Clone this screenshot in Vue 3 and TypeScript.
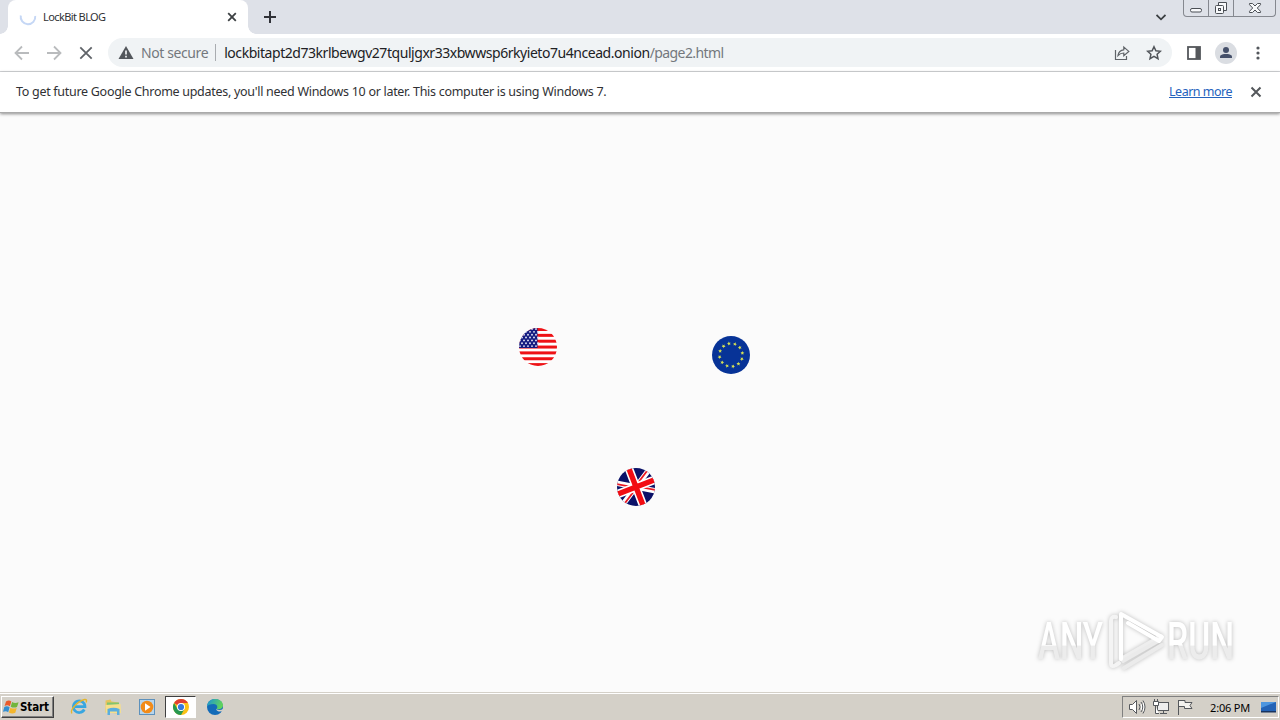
<template>
    <div class="screen">
        <header class="tab-strip">
            <div class="tab">
                <svg class="spinner" width="18" height="18" viewBox="0 0 18 18">
                    <path d="M1.8 7.5A7.3 7.3 0 1 0 16.2 8" />
                </svg>
                <span class="tab-title">LockBit BLOG</span>
                <svg class="tab-close" width="10" height="10" viewBox="0 0 10 10"><path d="M1.2 1.2l7.6 7.6M8.8 1.2L1.2 8.8" /></svg>
            </div>
            <svg class="new-tab" width="12" height="12" viewBox="0 0 12 12"><path d="M6 0v12M0 6h12" /></svg>
            <svg class="tab-search" width="10" height="7" viewBox="0 0 10 7"><path d="M.5 1L5 5.300 9.500 1" /></svg>
            <div class="window-controls">
                <div class="control">
                    <svg width="14" height="16" viewBox="0 0 14 16"><rect x="1.5" y="8.5" width="11" height="3.500" rx="1.5" /></svg>
                </div>
                <div class="control">
                    <svg width="14" height="16" viewBox="0 0 14 16">
                        <path d="M4.5 5V2.5h8v8h-2.5" />
                        <rect x="1.5" y="5.5" width="8" height="8" rx="1" />
                        <rect x="4.5" y="8.5" width="2" height="2" />
                    </svg>
                </div>
                <div class="control wide">
                    <svg width="14" height="16" viewBox="0 0 14 16"><path d="M1.5 3.5h3L7 6l2.5-2.5h3v1.2L9.3 8l3.2 3.3v1.2h-3L7 10l-2.5 2.5h-3v-1.2L4.7 8 1.5 4.7z" /></svg>
                </div>
            </div>
        </header>

        <nav class="toolbar">
            <svg class="nav-icon disabled" width="16" height="16" viewBox="0 0 16 16"><path d="M15 8H2M8 1.5L1.5 8 8 14.5" /></svg>
            <svg class="nav-icon disabled" width="16" height="16" viewBox="0 0 16 16"><path d="M1 8h13M8 1.5L14.5 8 8 14.5" /></svg>
            <svg class="nav-icon stop" width="16" height="16" viewBox="0 0 16 16"><path d="M2.3 2.3l11.4 11.4M13.7 2.3L2.3 13.7" /></svg>
            <div class="omnibox">
                <svg class="warning" width="16" height="14" viewBox="0 0 16 14">
                    <path d="M8 0l7.5 13H.5z" fill="#53575c" />
                    <path d="M8 4.5v4M8 9.8v1.8" stroke="#f1f3f4" stroke-width="1.7" />
                </svg>
                <span class="secure">Not secure</span>
                <span class="divider"></span>
                <span class="host">{{ host }}</span><span class="path">/page2.html</span>
                <svg class="share" width="16" height="16" viewBox="0 0 16 16">
                    <path d="M1.5 5v9.5h11V11" />
                    <path d="M4 10.5c.6-3.8 2.7-5.5 5.8-5.7V2l5 4.4-5 4.3V8C7.4 8 5.7 8.7 4 10.5z" />
                </svg>
                <svg class="star" width="16" height="16" viewBox="0 0 16 16"><path d="M8 1.7l1.9 4.1 4.5.5-3.3 3 .9 4.4L8 11.4l-4 2.3.9-4.4-3.3-3 4.5-.5z" /></svg>
            </div>
            <svg class="side-panel" width="14" height="14" viewBox="0 0 14 14">
                <rect x="1" y="1" width="12" height="12" fill="none" stroke="#54575b" stroke-width="1.8" />
                <path d="M8.5 1H13v12H8.5z" fill="#54575b" />
            </svg>
            <svg class="avatar" width="22" height="22" viewBox="0 0 22 22">
                <circle cx="11" cy="11" r="11" fill="#dadde2" />
                <circle cx="11" cy="8" r="3" fill="#45506a" />
                <path d="M5 16v-1.3C5 12.5 8.8 12 11 12s6 .5 6 2.7V16z" fill="#45506a" />
            </svg>
            <svg class="menu" width="4" height="14" viewBox="0 0 4 14">
                <circle v-for="cy in [2, 7, 12]" :key="cy" cx="2" :cy="cy" r="1.6" fill="#53575c" />
            </svg>
        </nav>

        <div class="infobar">
            <span class="info-text">To get future Google Chrome updates, you'll need Windows 10 or later. This computer is using Windows 7.</span>
            <a class="learn-more">Learn more</a>
            <svg class="info-close" width="12" height="12" viewBox="0 0 12 12"><path d="M1.5 1.5l9 9M10.5 1.5l-9 9" /></svg>
        </div>

        <main class="page">
            <svg class="flag usa" width="40" height="40" viewBox="-20 -20 40 40">
                <clipPath id="disc"><circle r="19" /></clipPath>
                <g clip-path="url(#disc)">
                    <rect x="-20" y="-20" width="40" height="40" fill="#fff" />
                    <rect v-for="i in 7" :key="i" x="-20" :y="-19 + (i - 1) * 5.85" width="40" height="3" fill="#ee1216" />
                    <rect x="-20" y="-20" width="19.5" height="21" fill="#141b80" />
                    <circle v-for="(s, i) in usaStars" :key="`s${i}`" :cx="s.x" :cy="s.y" r=".95" fill="#e4e5f5" />
                </g>
            </svg>
            <svg class="flag eu" width="40" height="40" viewBox="-20 -20 40 40">
                <circle r="19" fill="#073397" />
                <polygon v-for="a in 12" :key="a" :transform="`rotate(${a * 30 - 10}) translate(0 -11.700)`" points="0,-1.9 .6,-.6 1.9,-.5 .9,.5 1.2,1.8 0,1.1 -1.2,1.8 -.9,.5 -1.9,-.5 -.6,-.6" fill="#d4df55" />
            </svg>
            <svg class="flag uk" width="40" height="40" viewBox="-20 -20 40 40">
                <g clip-path="url(#disc)">
                    <rect x="-20" y="-20" width="40" height="40" fill="#0b1268" />
                    <g transform="rotate(-21)">
                        <path d="M-24-15L24 15M24-15L-24 15" stroke="#fff" stroke-width="5.400" />
                        <path d="M-24-14L0 1M0-1l24 15M24-16L0-1M0 1l-24 15" stroke="#ec1923" stroke-width="1.800" />
                        <path d="M0-20v40M-20 0h40" stroke="#fff" stroke-width="8.600" />
                        <path d="M0-20v40M-20 0h40" stroke="#f20c12" stroke-width="5.400" />
                    </g>
                </g>
            </svg>

            <svg class="watermark" width="250" height="76" viewBox="1030 604 250 76">
                <defs>
                    <linearGradient id="fade" x1="0" y1="0" x2="0" y2="1">
                        <stop offset=".56" stop-color="#fff" />
                        <stop offset=".58" stop-color="#ececec" />
                    </linearGradient>
                </defs>
                <text x="1038" y="659" textLength="65" lengthAdjust="spacingAndGlyphs" fill="url(#fade)">ANY</text>
                <text x="1167" y="659" textLength="67" lengthAdjust="spacingAndGlyphs" fill="url(#fade)">RUN</text>
                <g class="mark">
                    <path d="M1116 617q-5-1-5 4v42q0 5 5 2l3-2" stroke="#f4f4f4" />
                    <path d="M1121 615v44l40-23" stroke="#eee" />
                    <path d="M1158 641l-35 20M1162 645l-38 23" stroke="#ebebeb" />
                    <path d="M1121 659v-45l41 23-3 4-31-18" stroke="#fff" />
                </g>
            </svg>
        </main>

        <footer class="taskbar">
            <button class="start">
                <svg width="17" height="16" viewBox="0 0 17 16">
                    <path d="M3 2.500Q6 .5 8.300 2.500L6.900 7.3Q4.500 5.500 1.600 7z" fill="#ea5a2b" />
                    <path d="M9.100 2.900q2.700 1.800 6.500.3L14 8q-3.300 1.300-6.300-.3z" fill="#72b53d" />
                    <path d="M1.300 7.900q2.800-1.500 5.300.3L5.200 13.200Q3 11.500 0 12.800z" fill="#338ed1" />
                    <path d="M7.400 8.700q2.700 1.600 6.300.2L12.300 13.800q-3.200 1.500-6.400-.2z" fill="#f4b62d" />
                </svg>
                <span>Start</span>
            </button>
            <div class="launch">
                <svg width="18" height="18" viewBox="0 0 18 18">
                    <path d="M14.300 11.500A5.800 5.800 0 1 1 15 8.700H5" fill="none" stroke="#38a6e0" stroke-width="2.700" />
                    <path d="M2 15.500C-1 13 7 3.500 14.500 1.500c2.500-.4 2.300 1.500 1.500 3" fill="none" stroke="#e3b52c" stroke-width="1.400" />
                </svg>
            </div>
            <div class="launch">
                <svg width="18" height="18" viewBox="0 0 18 18">
                    <path d="M1.500 2.500l5-1 1 2 7 1v11l-13-1z" fill="#e5c45e" />
                    <path d="M3 4.500h12v3H3z" fill="#82c46e" />
                    <path d="M1.500 7l15-1 .5 9H2z" fill="#f6df8c" />
                    <path d="M3.500 17v-6q6-2.500 12 0v6H13v-3.500H6V17z" fill="#5aaede" />
                </svg>
            </div>
            <div class="launch">
                <svg width="18" height="18" viewBox="0 0 18 18">
                    <rect x="1.500" y="1.500" width="15" height="15" fill="#b7d5ec" stroke="#5d91bc" />
                    <circle cx="9" cy="9" r="6.300" fill="#f28b18" />
                    <path d="M7 5.300L12.500 9 7 12.700z" fill="#fff" />
                </svg>
            </div>
            <div class="launch active">
                <svg width="18" height="18" viewBox="0 0 18 18">
                    <circle cx="9" cy="9" r="8" fill="#fbc116" />
                    <path d="M9 9L2.070 5A8 8 0 0 1 15.930 5H9z" fill="#df3f32" />
                    <path d="M2.070 5A8 8 0 0 0 9 17l3.500-6-7 0z" fill="#279850" />
                    <circle cx="9" cy="9" r="4" fill="#fff" />
                    <circle cx="9" cy="9" r="3.100" fill="#3479df" />
                </svg>
            </div>
            <div class="launch">
                <svg width="18" height="18" viewBox="0 0 18 18">
                    <defs>
                        <linearGradient id="edge" x1="0" y1="0" x2="1" y2=".3">
                            <stop offset="0" stop-color="#1893d8" />
                            <stop offset="1" stop-color="#61d35c" />
                        </linearGradient>
                    </defs>
                    <circle cx="9" cy="9" r="8" fill="#136bb8" />
                    <path d="M1 8.500C1.500-1.500 17-1 17 7.500c0 3-3 4.200-6.500 3.500 2-2.500 0-5-3-5S1.500 7 1 8.500z" fill="url(#edge)" />
                    <path d="M10 11c2 1.500 5 1.200 7 0v1.800c-2.500 1.400-6 1-7-1.800z" fill="#d4d0c8" />
                </svg>
            </div>
            <div class="tray">
                <svg width="18" height="18" viewBox="0 0 18 18" class="tray-icon">
                    <path d="M1.500 6.500h3l4-4v13l-4-4h-3zM11 6q2 3 0 6M13 4q3.500 5 0 10M15 2.500q4 6.500 0 13" />
                </svg>
                <svg width="18" height="18" viewBox="0 0 18 18" class="tray-icon">
                    <rect x="5.500" y="4.500" width="11" height="8" fill="#eee" />
                    <path d="M8 15.500h7M11.500 13v2M3.500 8v7.500H7" />
                    <path d="M1.500 3.500h5v4h-5zM2.500 1v2M5.500 1v2" fill="#fff" />
                </svg>
                <svg width="18" height="18" viewBox="0 0 18 18" class="tray-icon">
                    <path d="M2.500 2v15M3 2.500h6v2h7l-2 3 2 3H8.500v-2H3" fill="#f3f2ee" />
                </svg>
                <span class="clock">2:06 PM</span>
                <svg width="16" height="16" viewBox="0 0 16 16">
                    <path d="M0 3h15v9H0z" fill="#2363b6" />
                    <path d="M0 3h15L0 9z" fill="#4d96df" />
                    <path d="M0 12h15v1.500H0z" fill="#18345f" />
                </svg>
            </div>
        </footer>
    </div>
</template>

<script setup lang="ts">
const host = 'lockbitapt2d73krlbewgv27tquljgxr33xbwwsp6rkyieto7u4ncead.onion';

// staggered rows of stars in the canton
const usaStars: { x: number; y: number }[] = [];
for (let row = 0; row < 7; row++) {
    for (let col = 0; col < 5; col++) {
        usaStars.push({ x: -18 + col * 4 + (row % 2) * 2, y: -18 + row * 2.85 });
    }
}
</script>

<style>
body {
    overflow: hidden;
}
</style>

<style scoped>
.screen {
    width: 1280px;
    height: 720px;
    display: flex;
    flex-direction: column;
    background: #fbfbfb;
    font-family: "Noto Sans", "Open Sans", sans-serif;
    font-size: 12px;
    color: #303134;
}

svg {
    display: block;
    flex: none;
}

span, a {
    white-space: nowrap;
}

.tab-strip {
    height: 34px;
    flex: none;
    display: flex;
    align-items: center;
    background: #dee1e8;
    padding: 0 4px 0 8px;
}

.tab {
    position: relative;
    box-sizing: border-box;
    width: 240px;
    height: 34px;
    display: flex;
    align-items: center;
    padding: 0 11px;
    background: #fff;
    border-radius: 8px 8px 0 0;
}

/* flared feet of the active tab */
.tab::before,
.tab::after {
    content: "";
    position: absolute;
    bottom: 0;
    width: 8px;
    height: 8px;
}

.tab::before {
    left: -8px;
    background: radial-gradient(circle at 0 0, transparent 7.5px, #fff 8px);
}

.tab::after {
    right: -8px;
    background: radial-gradient(circle at 100% 0, transparent 7.5px, #fff 8px);
}

.spinner {
    fill: none;
    stroke: #c5d7f5;
    stroke-width: 2;
}

.tab-title {
    margin-left: 6px;
    padding-bottom: 2px;
    font-size: 11px;
    letter-spacing: -0.6px;
}

.tab-close {
    margin-left: auto;
    stroke: #3c4043;
    stroke-width: 1.8;
}

.new-tab {
    margin-left: 16px;
    stroke: #303238;
    stroke-width: 2;
}

.tab-search {
    margin-left: auto;
    margin-right: 17px;
    fill: none;
    stroke: #3c4043;
    stroke-width: 1.8;
}

.window-controls {
    align-self: flex-start;
    box-sizing: border-box;
    width: 93px;
    height: 17px;
    display: flex;
    border: 1px solid #85888f;
    border-top: none;
    border-radius: 0 0 4px 4px;
}

.control {
    width: 24px;
    display: flex;
    justify-content: center;
    border-right: 1px solid #85888f;
}

.control svg {
    fill: #f8f9fb;
    stroke: #4b4f55;
}

.control.wide {
    flex: 1;
    border-right: none;
}

.toolbar {
    box-sizing: border-box;
    height: 38px;
    flex: none;
    display: flex;
    align-items: center;
    padding: 0 20px 0 14px;
    background: #fff;
    border-bottom: 1px solid #d5d7da;
}

.nav-icon {
    margin-right: 16px;
    fill: none;
    stroke-width: 1.8;
}

.disabled {
    stroke: #b9bbbd;
}

.stop {
    margin-right: 14px;
    stroke: #5f6368;
}

.omnibox {
    box-sizing: border-box;
    width: 1064px;
    height: 29px;
    display: flex;
    align-items: center;
    padding: 0 10px;
    border-radius: 15px;
    background: #f0f3f5;
    font-size: 14px;
}

.secure {
    margin-left: 7px;
    color: #74787d;
    letter-spacing: -0.4px;
}

.divider {
    width: 1px;
    height: 17px;
    margin: 0 8px 0 7px;
    background: #a9acb0;
}

.host {
    color: #202124;
    letter-spacing: -0.45px;
}

.path {
    color: #74787d;
    letter-spacing: -0.6px;
}

.share {
    margin-left: auto;
    fill: none;
    stroke: #5f6368;
    stroke-width: 1.2;
}

.star {
    margin-left: 16px;
    fill: none;
    stroke: #505459;
    stroke-width: 1.5;
}

.side-panel {
    margin-left: 15px;
}

.avatar {
    margin-left: 14px;
}

.menu {
    margin-left: auto;
}

.infobar {
    position: relative;
    z-index: 1;
    box-sizing: border-box;
    height: 41px;
    flex: none;
    display: flex;
    align-items: center;
    padding: 0 18px 1px 16px;
    background: #fff;
    border-bottom: 1px solid #aaa;
    box-shadow: 0 1px 3px rgba(0, 0, 0, 0.45);
    font-size: 12.5px;
}

.info-text {
    letter-spacing: -0.29px;
}

.learn-more {
    margin-left: auto;
    color: #2462bd;
    text-decoration: underline;
    letter-spacing: -0.5px;
}

.info-close {
    margin-left: 18px;
    stroke: #54575b;
    stroke-width: 2;
}

.page {
    position: relative;
    flex: 1;
}

/* the flags orbit freely over the page */
.flag {
    position: absolute;
}

.usa {
    left: 518px;
    top: 214px;
}

.eu {
    left: 711px;
    top: 222px;
}

.uk {
    left: 616px;
    top: 354px;
}

.watermark {
    position: absolute;
    left: 1030px;
    top: 491px;
    overflow: visible;
    filter: drop-shadow(0 0 2px rgba(0, 0, 0, 0.25));
}

.watermark text {
    font-family: Roboto, sans-serif;
    font-size: 51px;
    font-weight: 500;
}

.mark path {
    fill: none;
    stroke-width: 4;
    stroke-linejoin: round;
    stroke-linecap: round;
}

.taskbar {
    box-sizing: border-box;
    height: 28px;
    flex: none;
    display: flex;
    align-items: center;
    padding: 1px 1px 0 1px;
    border-top: 1px solid #d4d0c8;
    box-shadow: inset 0 1px #fff;
    background: #d4d0c8;
}

.start {
    box-sizing: border-box;
    width: 53px;
    height: 22px;
    display: flex;
    align-items: center;
    padding: 0 1px;
    margin: 0 9px 0 0;
    border: 1px solid;
    border-color: #fff #404040 #404040 #fff;
    box-shadow: inset -1px -1px #808080;
    background: #d4d0c8;
    color: #000;
    font: bold 11.5px "DejaVu Sans Condensed", "DejaVu Sans", sans-serif;
    letter-spacing: -0.1px;
}

.launch {
    box-sizing: border-box;
    width: 31px;
    height: 22px;
    display: flex;
    align-items: center;
    justify-content: center;
    margin-right: 3px;
}

.launch.active {
    background: #fff;
    border: 1px solid;
    border-color: #404040 #fff #fff #404040;
}

.tray {
    box-sizing: border-box;
    width: 157px;
    height: 22px;
    display: flex;
    align-items: center;
    margin-left: auto;
    padding: 0 1px 0 5px;
    border: 1px solid;
    border-color: #808080 #fff #fff #808080;
    color: #000;
    font-size: 11px;
}

.tray-icon {
    margin-right: 6px;
    fill: #fff;
    stroke: #55585c;
}

.clock {
    margin-left: auto;
    margin-right: 11px;
    letter-spacing: -0.2px;
}
</style>
